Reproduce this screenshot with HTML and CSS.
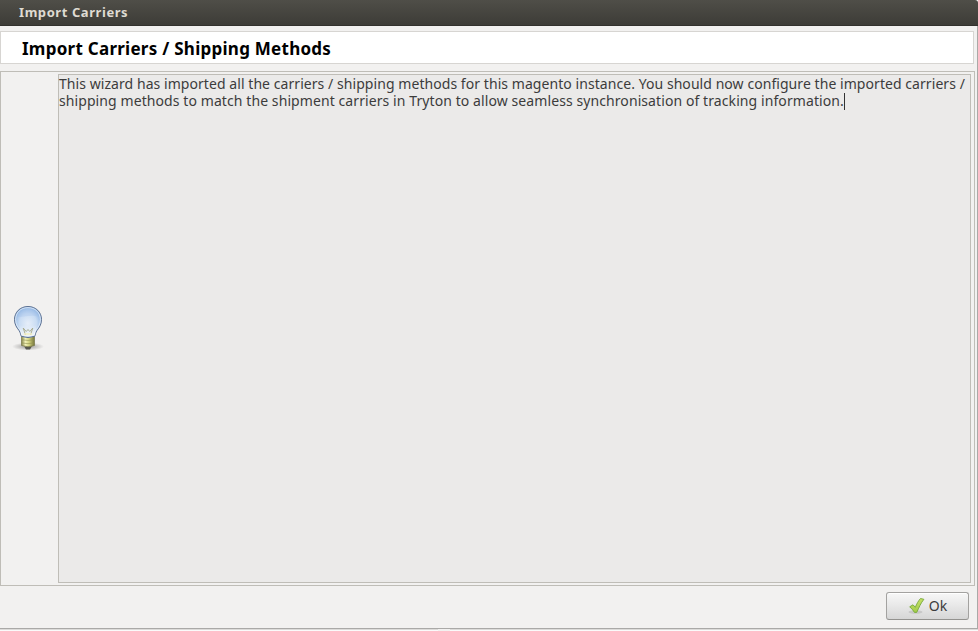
FILE: index.html
```
<!DOCTYPE html>
<html lang="en">
<head>
<meta charset="utf-8">
<title>Import Carriers</title>
<link rel="stylesheet" href="styles.css">
</head>
<body>
<div class="window">
  <header class="titlebar"><span class="window-title">Import Carriers</span></header>
  <main class="content">
    <div class="heading"><h1 class="heading-text">Import Carriers / Shipping Methods</h1></div>
    <section class="panel">
      <div class="panel-icon">
        <svg width="36" height="48" viewBox="0 0 36 48">
          <defs>
            <radialGradient id="glass" cx="50%" cy="55%" r="58%">
              <stop offset="0" stop-color="#e6eef9"/>
              <stop offset=".55" stop-color="#c9dcf3"/>
              <stop offset="1" stop-color="#83ade0"/>
            </radialGradient>
            <linearGradient id="neck" x1="0" y1="0" x2="0" y2="1">
              <stop offset="0" stop-color="#ffffff" stop-opacity="0"/>
              <stop offset="1" stop-color="#f6f7f2"/>
            </linearGradient>
            <linearGradient id="brass" x1="0" y1="0" x2="1" y2="0">
              <stop offset="0" stop-color="#87874b"/>
              <stop offset=".3" stop-color="#f3f3ba"/>
              <stop offset=".6" stop-color="#d0d07c"/>
              <stop offset="1" stop-color="#737339"/>
            </linearGradient>
            <radialGradient id="shadow">
              <stop offset="0" stop-color="#000" stop-opacity=".36"/>
              <stop offset="1" stop-color="#000" stop-opacity="0"/>
            </radialGradient>
          </defs>
          <ellipse cx="18" cy="41.500" rx="16" ry="4" fill="url(#shadow)"/>
          <path d="M14 41h8l-2 3.500h-4z" fill="#55564f"/>
          <path d="M11.500 30h13v10.500q-6.500 2.500-13 0z" fill="url(#brass)" stroke="#77774a" stroke-width=".7"/>
          <path d="M11.500 34.700q6.500 1.500 13 0M11.500 37.900q6.500 1.500 13 0" fill="none" stroke="#8e8e50" stroke-width=".6"/>
          <path d="M18 1.500C10 1.500 4.500 7.300 4.500 14.500c0 5 2.200 8 4.500 11 1.500 2 1.500 4 2.300 5.800q6.700 2.500 13.400 0c.8-1.800.8-3.800 2.300-5.800 2.300-3 4.500-6 4.500-11C31.500 7.300 26 1.500 18 1.500z" fill="url(#glass)" stroke="#5d7191"/>
          <path d="M9 20h18q-1 5-2.500 10.500-6.500 2-13 0Q10 25 9 20z" fill="url(#neck)"/>
          <path d="M18 2.600C10.800 2.600 5.600 7.700 5.600 14.500c0 4.500 2 7.300 4.300 10.300 1.400 2 1.500 4 2.200 5.600M18 2.600c7.200 0 12.400 5.100 12.400 11.900 0 4.500-2 7.300-4.300 10.300-1.400 2-1.500 4-2.200 5.600" fill="none" stroke="#fff" stroke-opacity=".65" stroke-width=".9"/>
          <path d="M7.500 12C9 6.500 13 4.500 18 4.500S27 6.500 28.500 12q-4-2-10.500-1T7.500 12z" fill="#a5c4ea" opacity=".35"/>
          <path d="M15.500 30l-2.300-7 3 3.500 1.800-2 1.800 2 3-3.500-2.300 7" fill="none" stroke="#a5a889" stroke-width=".9"/>
          <path d="M14 29h8" stroke="#f3f1c3" stroke-width="1.500"/>
        </svg>
      </div>
      <div class="message">
        <span class="line line-first">This wizard has imported all the carriers / shipping methods for this magento instance. You should now configure the imported carriers /</span>
        <span class="line line-last">shipping methods to match the shipment carriers in Tryton to allow seamless synchronisation of tracking information.<i class="caret"></i></span>
      </div>
    </section>
    <footer class="actions">
      <button class="ok" type="button">
        <svg width="19" height="18" viewBox="0 0 19 18">
          <defs>
            <linearGradient id="tick" x1="0" y1="0" x2="0" y2="1">
              <stop offset="0" stop-color="#c6e268"/>
              <stop offset="1" stop-color="#a3cb4a"/>
            </linearGradient>
          </defs>
          <ellipse cx="7.500" cy="15" rx="7" ry="1.800" fill="#000" opacity=".1"/>
          <path d="M1.700 9.800l3.300-2 2.300 2.500C8.700 7 10.300 3.800 12.500 1.500l3.400.8C12.800 6 11 10.500 8.700 15.400H6.500C5.200 13.300 3.600 11.500 1.700 9.800z" fill="url(#tick)" stroke="#76a83a" stroke-width=".9" stroke-linejoin="round"/>
        </svg>
        <span class="ok-label">Ok</span>
      </button>
    </footer>
  </main>
  <div class="edge"><span class="grip"></span></div>
</div>
</body>
</html>
```
FILE: styles.css
```
* { box-sizing: border-box; }
body {
  margin: 0;
  background: #fff;
  font-family: "Noto Sans", "Open Sans", sans-serif;
  color: #3c3c3c;
}
.window {
  width: 978px;
  height: 631px;
  display: flex;
  flex-direction: column;
  overflow: hidden;
}
.titlebar {
  height: 26px;
  padding-left: 19px;
  background: linear-gradient(#4f4e48, #3d3c37);
  border-bottom: 1px solid #32312d;
  border-top-right-radius: 3px;
}
.window-title {
  display: block;
  font-size: 13px;
  line-height: 24px;
  font-weight: 700;
  letter-spacing: 0.57px;
  color: #dfdbd2;
  white-space: nowrap;
}
.content {
  flex: 1;
  display: flex;
  flex-direction: column;
  background: #f2f1f0;
  border-right: 1px solid #aaa9a7;
  padding: 5px 2px 0 0;
}
.heading {
  height: 33px;
  margin-right: 1px;
  padding-left: 21px;
  background: #fff;
  border: 1px solid #d7d5d2;
}
.heading-text {
  margin: 0;
  font-size: 17px;
  line-height: 33px;
  font-weight: 700;
  letter-spacing: 0.26px;
  color: #000;
  white-space: nowrap;
}
.panel {
  height: 515px;
  margin-top: 7px;
  display: flex;
  border: 1px solid #bfbdb7;
  padding: 2px 3px 2px 0;
}
.panel-icon {
  width: 57px;
  display: flex;
  align-items: center;
  justify-content: center;
  padding-right: 3px;
}
.message {
  flex: 1;
  min-width: 0;
  background: #ebeae9;
  border: 1px solid #bfbdb7;
  font-size: 14px;
  line-height: 17px;
  white-space: nowrap;
}
.line {
  display: flex;
  height: 17px;
}
.line-first { letter-spacing: 0.06px; }
.line-last { letter-spacing: 0.087px; }
.caret {
  width: 1px;
  height: 17px;
  margin-top: 1px;
  background: #333;
}
.actions {
  flex: 1;
  display: flex;
  justify-content: flex-end;
  padding: 6px 6px 0 0;
}
.ok {
  width: 83px;
  height: 28px;
  padding: 0;
  display: flex;
  align-items: center;
  justify-content: center;
  gap: 2px;
  font: inherit;
  font-size: 14px;
  color: #3c3c3c;
  border: 1px solid #a3a2a0;
  border-bottom-color: #93928f;
  border-radius: 3px;
  background: linear-gradient(#f7f7f7, #e9e9e9 45%, #d6d6d6);
  box-shadow: inset 0 1px 0 #fff;
}
.ok-label { padding-bottom: 2px; }
.edge {
  height: 3px;
  border-top: 1px solid #aaa9a7;
  background: linear-gradient(#dcdbd9 50%, #fafafa 50%);
  display: flex;
  justify-content: center;
}
.grip {
  width: 12px;
  height: 2px;
  margin-right: 90px;
  background: #f2f1f0;
}
```
